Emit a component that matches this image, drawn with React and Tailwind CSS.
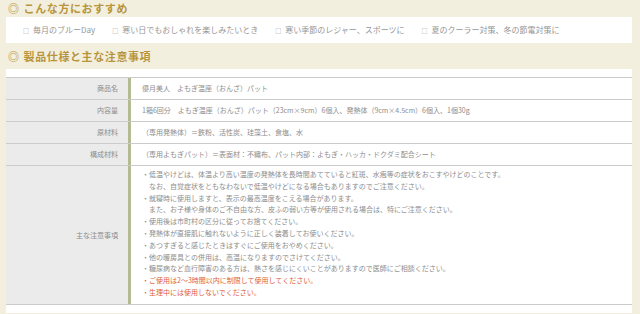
import React from 'react';

const jp = { fontFamily: '"Noto Sans CJK JP", "Noto Sans", sans-serif' };

const recommends = [
  '毎月のブルーDay',
  '寒い日でもおしゃれを楽しみたいとき',
  '寒い季節のレジャー、スポーツに',
  '夏のクーラー対策、冬の節電対策に',
];

const specs = [
  { label: '商品名', value: '優月美人　よもぎ温座（おんざ）パット' },
  { label: '内容量', value: '1箱6回分　よもぎ温座（おんざ）パット（23cm×9cm）6個入、発熱体（9cm×4.5cm）6個入、1個30g' },
  { label: '原材料', value: '（専用発熱体）＝鉄粉、活性炭、珪藻土、食塩、水' },
  { label: '構成材料', value: '（専用よもぎパット）＝表面材：不織布、パット内部：よもぎ・ハッカ・ドクダミ配合シート' },
];

const notes = [
  { t: '・低温やけどは、体温より高い温度の発熱体を長時間あてていると紅斑、水疱等の症状をおこすやけどのことです。' },
  { t: 'なお、自覚症状をともなわないで低温やけどになる場合もありますのでご注意ください。', indent: true },
  { t: '・就寝時に使用しますと、表示の最高温度をこえる場合があります。' },
  { t: 'また、お子様や身体のご不自由な方、皮ふの弱い方等が使用される場合は、特にご注意ください。', indent: true },
  { t: '・使用後は市町村の区分に従ってお捨てください。' },
  { t: '・発熱体が直接肌に触れないように正しく装着してお使いください。' },
  { t: '・あつすぎると感じたときはすぐにご使用をおやめください。' },
  { t: '・他の暖房具との併用は、高温になりますのでさけてください。' },
  { t: '・糖尿病など血行障害のある方は、熱さを感じにくいことがありますので医師にご相談ください。' },
  { t: '・ご使用は2～3時間以内に制限して使用してください。', red: true },
  { t: '・生理中には使用しないでください。', red: true },
];

const Heading = ({ children, className }) => (
  <h2 className={`flex items-center gap-[4px] pl-[2px] text-[11px] font-semibold tracking-[0.6px] text-[#b8953c] ${className}`}>
    <span className="text-[11px]">◎</span>
    <span>{children}</span>
  </h2>
);

const App = () => {
  return (
    <div className="w-[640px] h-[314px] overflow-hidden bg-[#f3efdf] pl-[6px] pr-[8px]" style={jp}>
      <Heading className="h-[17px]">こんな方におすすめ</Heading>

      <div className="h-[26px] bg-white flex items-center gap-[17px] pl-[17px] text-[8px] text-[#969696]">
        {recommends.map((item, i) => (
          <span key={i} className="whitespace-nowrap flex items-center">
            <span className="text-[6px] mr-[4px]">□</span>
            {item}
          </span>
        ))}
      </div>

      <Heading className="h-[26px]">製品仕様と主な注意事項</Heading>

      <div className="bg-white pt-[8px] pb-[8px]">
        <div className="border-t border-[#cbcbcb] text-[7px] text-[#8d8d8d]">
          {specs.map((row, i) => (
            <div key={i} className="flex h-[22px] border-b border-[#cbcbcb]">
              <div className="w-[125px] shrink-0 bg-[#ebebeb] border-r-[3px] border-[#b3bb92] flex items-center justify-end pr-[10px]">
                {row.label}
              </div>
              <div className="flex items-center pl-[11px] whitespace-nowrap">{row.value}</div>
            </div>
          ))}
          <div className="flex border-b border-[#cbcbcb]">
            <div className="w-[125px] shrink-0 bg-[#ebebeb] border-r-[3px] border-[#b3bb92] flex items-center justify-end pr-[10px]">
              主な注意事項
            </div>
            <div className="pl-[11px] pt-[3px] pb-[5px] leading-[11.8px]">
              {notes.map((n, i) => (
                <div key={i} className={`whitespace-nowrap ${n.indent ? 'pl-[7px]' : ''} ${n.red ? 'text-[#e0603c]' : ''}`}>
                  {n.t}
                </div>
              ))}
            </div>
          </div>
        </div>
      </div>
    </div>
  );
};

export default App;
